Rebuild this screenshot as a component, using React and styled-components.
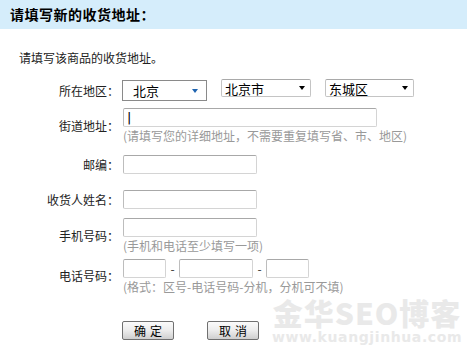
import React from 'react';
import styled, { createGlobalStyle } from "styled-components";

const GlobalStyle = createGlobalStyle`
  body {
    margin: 0;
    background: #fff;
    font-family: "Noto Sans CJK SC", "Liberation Sans", sans-serif;
    font-size: 12px;
    color: #222;
  }
`;

//whole page, holds the watermark
const Page = styled.div`
  position: relative;
  width: 467px;
  height: 353px;
  overflow: hidden;
`;

const Header = styled.div`
  height: 29px;
  line-height: 29px;
  background: #d5edfb;
  padding-left: 10px;
  font-size: 14px;
  letter-spacing: 0.5px;
  font-weight: bold;
  color: #000;
`;

const Intro = styled.p`
  margin: 21px 0 0 19px;
  line-height: 16px;
`;

const Form = styled.div`
  margin-top: 10px;
`;

//one line of the form, label on the left, fields on the right
const Row = styled.div`
  display: flex;
  align-items: center;
  height: ${p => p.$h}px;
`;

const Label = styled.div`
  width: 119px;
  flex-shrink: 0;
  text-align: right;
  line-height: 14px;
`;

const Field = styled.div`
  margin-left: ${p => p.$ml || 4}px;
  display: flex;
  flex-direction: column;
  align-items: flex-start;
`;

const Inline = styled.div`
  display: flex;
  align-items: center;
`;

const SelectBox = styled.div`
  display: flex;
  align-items: center;
  width: ${p => p.$w}px;
  height: ${p => (p.$blue ? 21 : 18)}px;
  box-sizing: border-box;
  border: 1px solid ${p => (p.$blue ? "#8a8a8a" : "#c4c4c4")};
  border-top-color: ${p => (p.$blue ? "#8a8a8a" : "#a9a9a9")};
  margin-right: 14px;
  margin-bottom: ${p => (p.$blue ? 0 : 5)}px;
  background: #fff;
  border-radius: ${p => (p.$blue ? 0 : 2)}px;
`;

const Select = styled.select`
  appearance: none;
  border: none;
  outline: none;
  background: transparent;
  flex: 1;
  min-width: 0;
  padding: 0 0 0 ${p => p.$pl}px;
  font-family: inherit;
  font-size: 13px;
  color: #000;
`;

const Arrow = styled.span`
  width: 0;
  height: 0;
  border-left: 3.5px solid transparent;
  border-right: 3.5px solid transparent;
  border-top: 4px solid ${p => (p.$blue ? "#1f64b0" : "#000")};
  margin-right: ${p => (p.$blue ? 8 : 5)}px;
`;

const Input = styled.input`
  box-sizing: border-box;
  width: ${p => p.$w}px;
  height: 19px;
  margin: 0;
  padding: 0 3px;
  border: 1px solid #d4d4d4;
  border-top-color: #a8a8a8;
  border-left-color: #bdbdbd;
  border-radius: 2px;
  font-family: "DejaVu Sans", sans-serif;
  font-size: 13px;
  outline: none;
  &::placeholder {
    color: #000;
    opacity: 1;
  }
`;

const Dash = styled.span`
  width: 13px;
  text-align: center;
  color: #333;
`;

const Hint = styled.div`
  margin-top: 2px;
  line-height: 14px;
  color: #999;
  white-space: nowrap;
`;

const Buttons = styled.div`
  display: flex;
  gap: 33px;
  margin: 24px 0 0 122px;
`;

const Button = styled.button`
  width: 52px;
  height: 19px;
  padding: 0;
  border: 1px solid #707070;
  border-radius: 2px;
  background: linear-gradient(#fbfbfb, #ececec 50%, #cfcfcf);
  font-family: inherit;
  font-size: 12px;
  letter-spacing: 4px;
  text-indent: 4px;
  color: #000;
  line-height: 17px;
`;

//light watermark lying over the bottom right corner
const Watermark = styled.div`
  position: absolute;
  left: 272px;
  top: 297px;
  color: #e9e9e9;
  pointer-events: none;
  display: flex;
  flex-direction: column;
  align-items: center;
`;

const MarkTitle = styled.div`
  font-size: 30px;
  font-weight: 900;
  line-height: 30px;
  letter-spacing: 1px;
`;

const MarkUrl = styled.div`
  font-family: "DejaVu Sans", sans-serif;
  font-size: 14px;
  font-weight: bold;
  letter-spacing: 0.6px;
  line-height: 14px;
  margin-top: 3px;
`;

const selects = [
  { w: 85, blue: true, pl: 10, value: "北京" },
  { w: 90, pl: 3, value: "北京市" },
  { w: 89, pl: 3, value: "东城区" },
];

export default function App() {
  return (
    <Page>
      <GlobalStyle />
      <Header>请填写新的收货地址：</Header>
      <Intro>请填写该商品的收货地址。</Intro>
      <Form>
        <Row $h={29}>
          <Label>所在地区：</Label>
          <Field $ml={3}>
            <Inline>
              {selects.map(s => (
                <SelectBox key={s.value} $w={s.w} $blue={s.blue}>
                  <Select $pl={s.pl} defaultValue={s.value}>
                    <option>{s.value}</option>
                  </Select>
                  <Arrow $blue={s.blue} />
                </SelectBox>
              ))}
            </Inline>
          </Field>
        </Row>
        <Row $h={41}>
          <Label>街道地址：</Label>
          <Field>
            <Input $w={254} placeholder="|" />
            <Hint>(请填写您的详细地址，不需要重复填写省、市、地区)</Hint>
          </Field>
        </Row>
        <Row $h={37}>
          <Label>邮编：</Label>
          <Field>
            <Input $w={134} />
          </Field>
        </Row>
        <Row $h={33}>
          <Label>收货人姓名：</Label>
          <Field>
            <Input $w={134} />
          </Field>
        </Row>
        <Row $h={39}>
          <Label>手机号码：</Label>
          <Field>
            <Input $w={134} />
            <Hint>(手机和电话至少填写一项)</Hint>
          </Field>
        </Row>
        <Row $h={42}>
          <Label>电话号码：</Label>
          <Field>
            <Inline>
              <Input $w={43} />
              <Dash>-</Dash>
              <Input $w={74} />
              <Dash>-</Dash>
              <Input $w={43} />
            </Inline>
            <Hint>(格式：区号-电话号码-分机，分机可不填)</Hint>
          </Field>
        </Row>
      </Form>
      <Buttons>
        <Button>确定</Button>
        <Button>取消</Button>
      </Buttons>
      <Watermark>
        <MarkTitle>金华SEO博客</MarkTitle>
        <MarkUrl>www.kuangjinhua.com</MarkUrl>
      </Watermark>
    </Page>
  );
}
